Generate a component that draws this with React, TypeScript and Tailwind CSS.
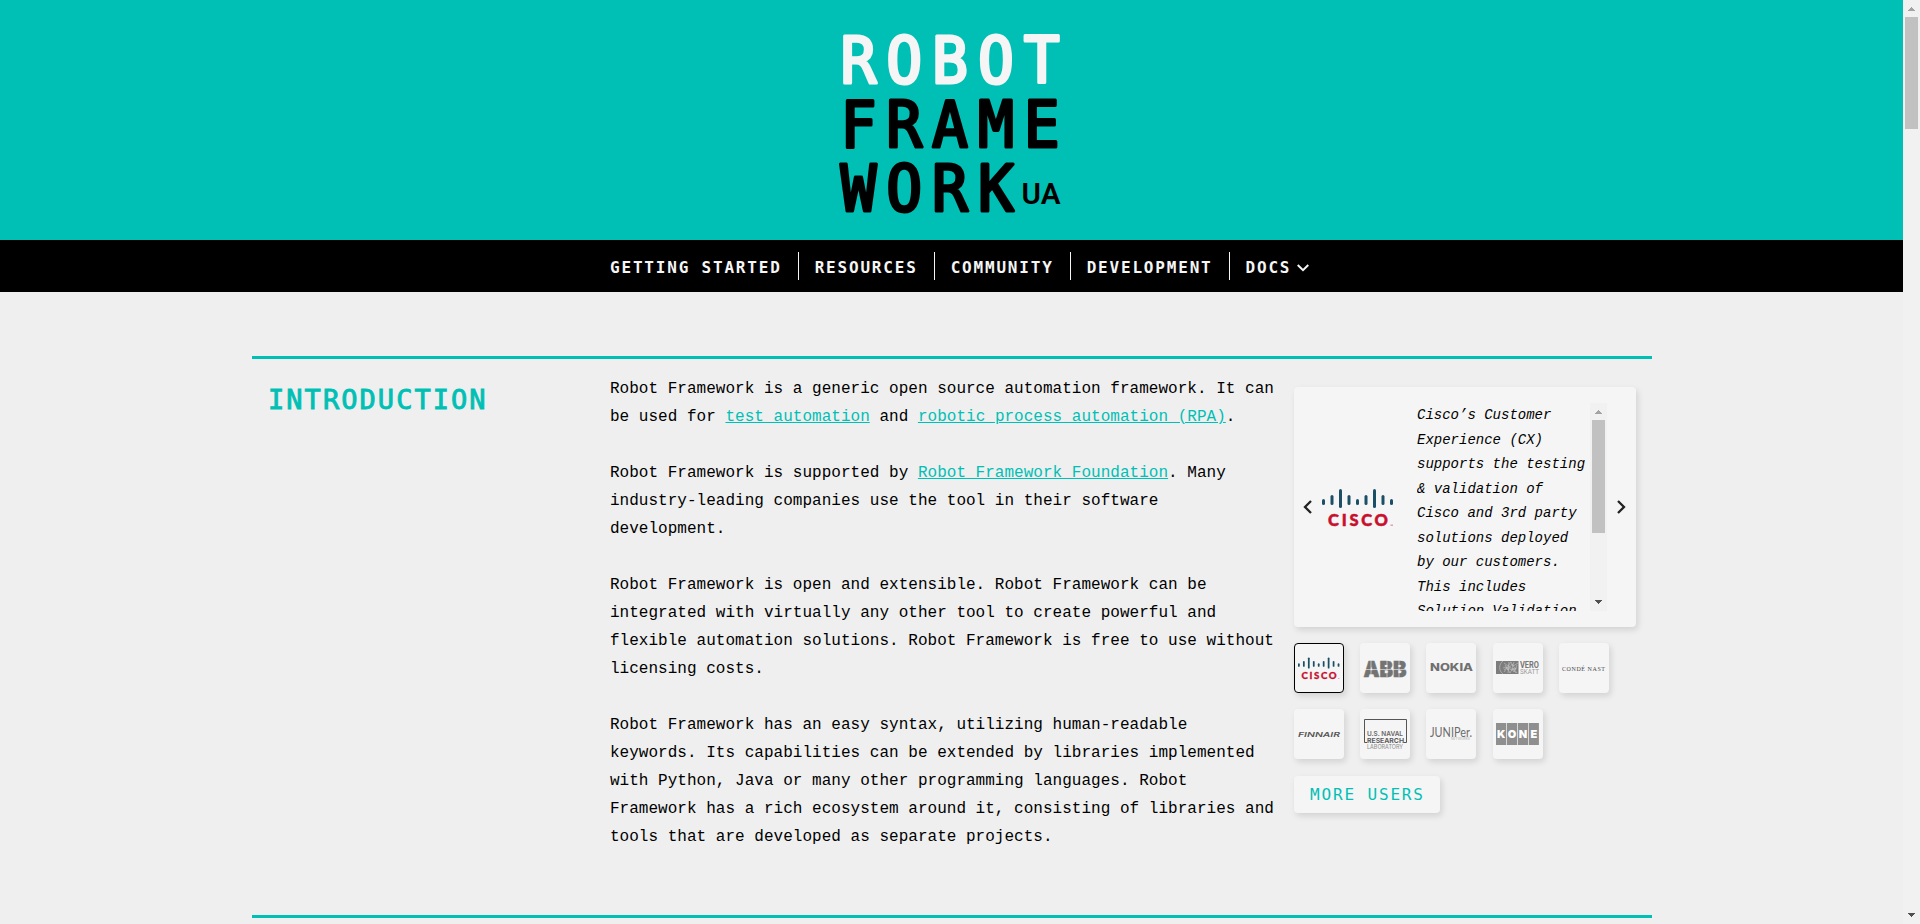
import React from "react";

const display = "font-['DejaVu_Sans_Mono',monospace]";
const body = "font-['Liberation_Mono','Courier_New',monospace]";

const navItems = ["GETTING STARTED", "RESOURCES", "COMMUNITY", "DEVELOPMENT"];

function Logo() {
  const rows = [
    { text: "ROBOT", y: 48.5, width: 217, fill: "#f5f5f5" },
    { text: "FRAME", y: 113, width: 217, fill: "#000000" },
    { text: "WORK", y: 177, width: 171, fill: "#000000" },
  ];
  return (
    <svg width="220" height="184" viewBox="0 0 220 184" className="block overflow-visible">
      {rows.map((row) => (
        <text
          key={row.text}
          transform={`translate(-1.5 ${row.y}) scale(0.94 1)`}
          fontFamily="DejaVu Sans Mono, monospace"
          fontSize="63.5"
          letterSpacing="10.5"
          fill={row.fill}
          stroke={row.fill}
          strokeWidth="3.2"
          strokeLinejoin="round"
        >
          {row.text}
        </text>
      ))}
      <text x="179.5" y="169.5" fontFamily="Roboto, sans-serif" fontWeight="600" fontSize="29" textLength="39" lengthAdjust="spacingAndGlyphs">
        UA
      </text>
    </svg>
  );
}

function Chevron({ d, className, size }: { d: string; className?: string; size: number }) {
  return (
    <svg width={size} height={size} viewBox="0 0 16 16" fill="none" stroke="currentColor" strokeWidth="2.3" className={className}>
      <path d={d} />
    </svg>
  );
}

function Cisco({ width, height }: { width: number; height: number }) {
  const bars = [
    [0, 10, 16], [8.5, 6, 16], [17, 0, 19], [25.5, 6, 16], [34, 10, 16],
    [42.5, 6, 16], [51, 0, 19], [59.5, 6, 16], [68, 10, 16],
  ];
  return (
    <svg width={width} height={height} viewBox="0 0 72 38">
      {bars.map(([x, top, bottom]) => (
        <line key={x} x1={x + 1.5} x2={x + 1.5} y1={top + 1.5} y2={bottom - 1.5} stroke="#1b4f66" strokeWidth="3" strokeLinecap="round" />
      ))}
      <text x="6" y="36.8" fontFamily="Lato, sans-serif" fontWeight="900" fontSize="16.5" fill="#c8102e" stroke="#c8102e" strokeWidth="0.5" textLength="60" lengthAdjust="spacing">
        CISCO
      </text>
      <rect x="68.5" y="35.5" width="2.5" height="1.5" fill="#e6a0ad" />
    </svg>
  );
}

function Abb() {
  return (
    <svg width="42" height="17" viewBox="0 0 42 17" className="overflow-visible">
      <text x="-0.5" y="16.5" fontFamily="Inter, sans-serif" fontWeight="900" fontSize="22" fill="#737373" stroke="#737373" strokeWidth="0.6" textLength="43" lengthAdjust="spacingAndGlyphs">
        ABB
      </text>
      <path d="M7 0V17M23 0V17M35 0V17M0 9.5H42" stroke="#f5f5f5" strokeWidth="0.6" />
    </svg>
  );
}

function Nokia() {
  return (
    <svg width="43" height="8" viewBox="0 0 43 8" className="overflow-visible">
      <text x="0" y="7.4" fontFamily="Inter, sans-serif" fontWeight="800" fontSize="10" fill="#707070" textLength="43" lengthAdjust="spacingAndGlyphs">
        NOKIA
      </text>
    </svg>
  );
}

function VeroSkatt() {
  return (
    <svg width="43" height="14" viewBox="0 0 43 14" className="overflow-visible">
      <rect width="22.5" height="13" fill="#7d7d7d" />
      <path
        d="M7 0a8 8 0 0 0 0 13M8 2l4 3 3-4 2 4 5-3M8 11l3-4 3 5 3-5 4 5M7 7l4-1 4 3 6-2M13 1l-1 11M18 1l-2 6 4 5M9 4l3 5 4-6 4 6M8 9l5-4 5 6 3-7"
        fill="none"
        stroke="#c6c6c6"
        strokeWidth="0.6"
      />
      <text x="24" y="6.8" fontFamily="Roboto, sans-serif" fontWeight="700" fontSize="9" fill="#777" textLength="19" lengthAdjust="spacingAndGlyphs">VERO</text>
      <text x="24" y="13.2" fontFamily="Roboto, sans-serif" fontSize="7" fill="#999" textLength="19" lengthAdjust="spacingAndGlyphs">SKATT</text>
    </svg>
  );
}

function CondeNast() {
  return (
    <svg width="43" height="9" viewBox="0 0 43 9" className="overflow-visible">
      <text x="0" y="7.4" fontFamily="Liberation Serif, serif" fontSize="6" fill="#4c4c4c" textLength="43">
        CONDÉ NAST
      </text>
    </svg>
  );
}

function Finnair() {
  return (
    <svg width="43" height="7" viewBox="0 0 43 7" className="overflow-visible">
      <text x="0" y="6.2" fontFamily="Inter, sans-serif" fontStyle="italic" fontWeight="600" fontSize="6.8" fill="#555" textLength="42" lengthAdjust="spacingAndGlyphs">
        FINNAIR
      </text>
    </svg>
  );
}

function NavalLab() {
  return (
    <svg width="43" height="30" viewBox="0 0 43 30" className="overflow-visible">
      <path d="M3 23.5H.5V.5H42.5V23.5H39.5" fill="none" stroke="#555" />
      <text x="3" y="17.2" fontFamily="Inter, sans-serif" fontWeight="600" fontSize="6.8" fill="#666" textLength="36" lengthAdjust="spacingAndGlyphs">U.S. NAVAL</text>
      <text x="3" y="24" fontFamily="Inter, sans-serif" fontWeight="700" fontSize="6.8" fill="#5c5c5c" textLength="37" lengthAdjust="spacingAndGlyphs">RESEARCH</text>
      <text x="3" y="29.5" fontFamily="Inter, sans-serif" fontSize="5.6" fill="#888" textLength="36" lengthAdjust="spacingAndGlyphs">LABORATORY</text>
    </svg>
  );
}

function Juniper() {
  return (
    <svg width="43" height="14" viewBox="0 0 43 14" className="overflow-visible">
      <text x="0" y="10" fontFamily="Lato, sans-serif" fontSize="12.5" fill="#6c6c6c" textLength="42" lengthAdjust="spacingAndGlyphs">JUNIPer.</text>
      <text x="21" y="13.2" fontFamily="Inter, sans-serif" fontSize="3" fill="#b0b0b0" textLength="19" lengthAdjust="spacingAndGlyphs">NETWORKS</text>
    </svg>
  );
}

function Kone() {
  return (
    <svg width="43" height="22" viewBox="0 0 43 22" className="overflow-visible">
      {["K", "O", "N", "E"].map((ch, i) => (
        <g key={ch}>
          <rect x={i * 10.9} width="10.2" height="22" fill="#8f8f8f" />
          <text x={i * 10.9 + 5.1} y="15" textAnchor="middle" fontFamily="Inter, sans-serif" fontWeight="900" fontSize="11" fill="#fff">
            {ch}
          </text>
        </g>
      ))}
    </svg>
  );
}

const cardShadow = "shadow-[2px_3px_6px_rgba(0,0,0,0.12)]";

function ScrollArrow({ up, color }: { up?: boolean; color: string }) {
  return (
    <svg width="7" height="4" viewBox="0 0 7 4" shapeRendering="crispEdges" className="shrink-0">
      <path d={up ? "M3 0h1v1h1v1h1v1h1v1H0V3h1V2h1V1h1z" : "M0 0h7v1H6v1H5v1H4v1H3V3H2V2H1V1H0z"} fill={color} />
    </svg>
  );
}

function Carousel() {
  return (
    <div className={`flex h-60 w-[342px] items-center rounded bg-[#f5f5f5] ${cardShadow}`}>
      <Chevron d="M11 2 5 8l6 6" size={16} className="ml-[6px] w-4 text-[#222]" />
      <div className="mt-[2px] ml-[6px] flex w-[72px] shrink-0">
        <Cisco width={72} height={38} />
      </div>
      <div className="ml-[23px] flex h-52 w-[190px] shrink-0 overflow-hidden">
        <p className={`w-[173px] ${body} text-[14px] leading-[24.5px] text-black italic`}>
          Cisco’s Customer<br />Experience (CX)<br />supports the testing<br />&amp; validation of<br />Cisco and 3rd party<br />solutions deployed<br />by our customers.<br />This includes<br />Solution Validation
        </p>
        <div className="flex w-[17px] shrink-0 flex-col items-center bg-[#f1f1f1] py-[7px]">
          <ScrollArrow up color="#a3a3a3" />
          <div className="mt-[6px] h-[113px] w-[13px] bg-[#c1c1c1]" />
          <div className="grow" />
          <ScrollArrow color="#505050" />
        </div>
      </div>
      <Chevron d="M5 2l6 6-6 6" size={16} className="ml-[6px] w-4 text-[#222]" />
    </div>
  );
}

const logos = [
  { name: "cisco", node: <Cisco width={42} height={23} /> },
  { name: "abb", node: <Abb /> },
  { name: "nokia", node: <Nokia /> },
  { name: "vero", node: <VeroSkatt /> },
  { name: "conde", node: <CondeNast /> },
  { name: "finnair", node: <Finnair /> },
  { name: "naval", node: <NavalLab /> },
  { name: "juniper", node: <Juniper /> },
  { name: "kone", node: <Kone /> },
];

function Link({ children }: { children: React.ReactNode }) {
  return (
    <a href="#" className="text-[#00c0b5] underline">
      {children}
    </a>
  );
}

export default function App() {
  return (
    <div className="flex h-[924px] w-full overflow-hidden bg-[#efefef] text-black">
      <div className="flex min-w-0 flex-1 flex-col">
        <header className="flex h-60 shrink-0 justify-center bg-[#00c0b5] pt-[34px]">
          <Logo />
        </header>
        <nav className={`flex h-[52px] shrink-0 items-center bg-black pl-[594px] ${display} text-[16px] font-bold text-[#f5f5f5]`}>
          {navItems.map((item) => (
            <a key={item} href="#" className="flex h-7 items-center border-r border-[#f5f5f5] px-4 pt-[3px] tracking-[1.81px]">
              {item}
            </a>
          ))}
          <a href="#" className="flex h-7 items-center pt-[3px] pl-4 tracking-[1.81px]">
            DOCS
            <Chevron d="M2 4.5 8 10.5l6-6" size={14} className="ml-[5px]" />
          </a>
        </nav>
        <main className="ml-[252px] w-[1400px] pt-16">
          <section className="flex h-[559px] border-t-[3px] border-[#00c0b5] pl-4">
            <h1 className={`w-[342px] shrink-0 pt-[22px] ${display} text-[27px] leading-[38px] tracking-[2.05px] text-[#00c0b5] [-webkit-text-stroke:0.9px_#00c0b5]`}>
              INTRODUCTION
            </h1>
            <div className={`w-[684px] shrink-0 space-y-7 pt-4 ${body} text-[16px] leading-7 tracking-[0.02px]`}>
              <p>
                Robot Framework is a generic open source automation framework. It can<br />
                be used for <Link>test automation</Link> and <Link>robotic process automation (RPA)</Link>.
              </p>
              <p>
                Robot Framework is supported by <Link>Robot Framework Foundation</Link>. Many<br />
                industry-leading companies use the tool in their software<br />
                development.
              </p>
              <p>
                Robot Framework is open and extensible. Robot Framework can be<br />
                integrated with virtually any other tool to create powerful and<br />
                flexible automation solutions. Robot Framework is free to use without<br />
                licensing costs.
              </p>
              <p>
                Robot Framework has an easy syntax, utilizing human-readable<br />
                keywords. Its capabilities can be extended by libraries implemented<br />
                with Python, Java or many other programming languages. Robot<br />
                Framework has a rich ecosystem around it, consisting of libraries and<br />
                tools that are developed as separate projects.
              </p>
            </div>
            <aside className="flex flex-col items-start pt-7">
              <Carousel />
              <div className="mt-4 grid grid-cols-[repeat(5,50px)] gap-x-[16.2px] gap-y-[16.4px]">
                {logos.map((logo, i) => (
                  <div
                    key={logo.name}
                    className={`flex h-[50px] w-[50px] items-center justify-center rounded bg-[#f5f5f5] ${cardShadow} ${i === 0 ? "border border-black" : ""}`}
                  >
                    {logo.node}
                  </div>
                ))}
              </div>
              <a href="#" className={`mt-[16.6px] flex h-[37px] w-[146px] items-center rounded bg-[#f5f5f5] pt-px pl-4 ${display} text-[16px] tracking-[1.85px] text-[#00c0b5] ${cardShadow}`}>
                MORE USERS
              </a>
            </aside>
          </section>
          <div className="h-[3px] bg-[#00c0b5]" />
        </main>
      </div>
      <div className="flex w-[17px] shrink-0 flex-col items-center bg-[#f1f1f1] py-[7px]">
        <ScrollArrow up color="#a3a3a3" />
        <div className="mt-[6px] h-28 w-[13px] shrink-0 bg-[#c1c1c1]" />
        <div className="grow" />
        <ScrollArrow color="#505050" />
      </div>
    </div>
  );
}
